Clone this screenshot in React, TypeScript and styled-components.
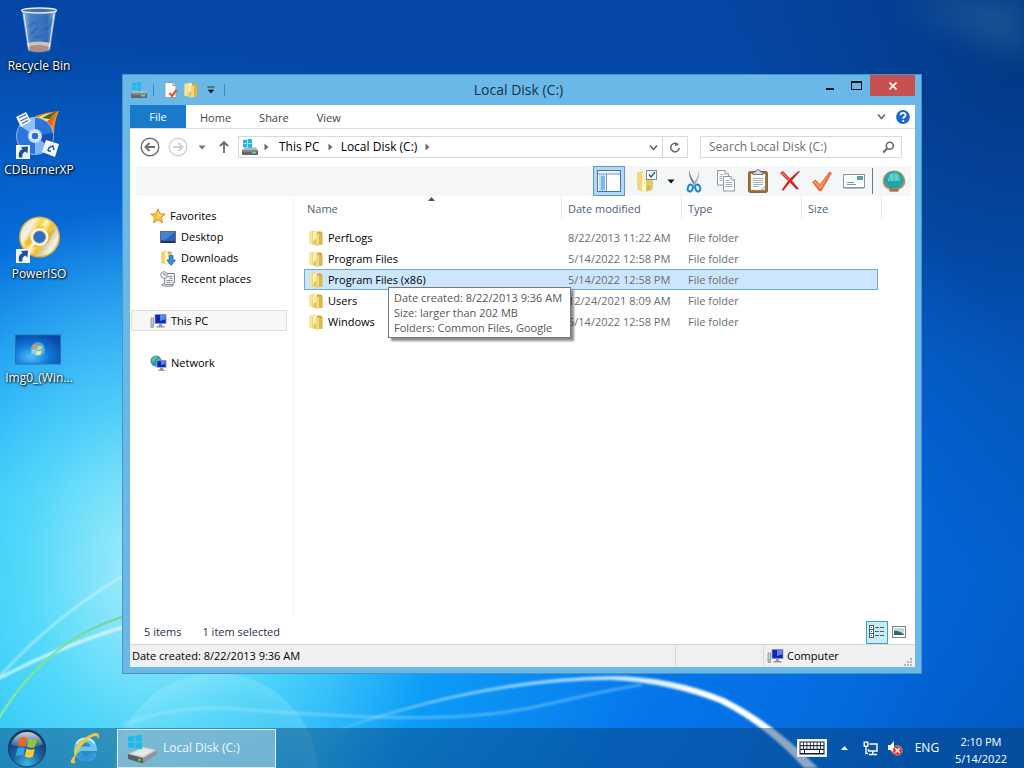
import React from "react";
import styled, { createGlobalStyle, css } from "styled-components";

const GlobalStyle = createGlobalStyle`
  *, *::before, *::after { box-sizing: border-box; }
  html, body, #root { height: 100%; }
  body {
    margin: 0;
    overflow: hidden;
    font-family: "Open Sans", "Noto Sans", "Liberation Sans", sans-serif;
    font-size: 11px;
    line-height: 16px;
    color: #000;
  }
  button, input { font: inherit; color: inherit; }
  svg { display: block; flex: none; }
`;

const buttonReset = css`
  border: 0;
  padding: 0;
  margin: 0;
  background: none;
`;

/* ---------- wallpaper ---------- */

const Screen = styled.div`
  position: relative;
  display: flex;
  flex-direction: column;
  min-height: 100vh;
  background:
    radial-gradient(ellipse 28% 48% at 15% 74%, rgba(196, 246, 250, 0.85), rgba(120, 232, 250, 0.6) 45%, rgba(50, 205, 250, 0) 100%),
    radial-gradient(ellipse 84% 74% at 8% 80%, #1cc4fa 0%, #1abcf8 22%, rgba(14, 160, 250, 0.9) 42%, rgba(6, 122, 240, 0.6) 68%, rgba(5, 95, 205, 0) 100%),
    radial-gradient(ellipse 58% 70% at 50% 80%, #0478ea 0%, rgba(4, 108, 228, 0.7) 60%, rgba(4, 90, 200, 0) 100%),
    radial-gradient(ellipse 30% 40% at 100% 8%, rgba(2, 44, 110, 0.6), rgba(2, 50, 130, 0) 100%),
    linear-gradient(180deg, #0546a4 0%, #0452b4 40%, #045cc4 75%, #0054b8 100%);
`;

const WallpaperSvg = styled.svg`
  position: absolute;
  inset: 0;
  width: 100%;
  height: 100%;
`;

function Wallpaper() {
  return (
    <WallpaperSvg viewBox="0 0 1024 768" preserveAspectRatio="none" aria-hidden="true">
      <defs>
        <filter id="soft" x="-20%" y="-20%" width="140%" height="140%">
          <feGaussianBlur stdDeviation="1" />
        </filter>
        <filter id="haze" x="-30%" y="-30%" width="160%" height="160%">
          <feGaussianBlur stdDeviation="16" />
        </filter>
        <linearGradient id="arc" gradientUnits="userSpaceOnUse" x1="340" y1="0" x2="700" y2="0">
          <stop offset="0" stopColor="#d8f4ff" stopOpacity=".3" />
          <stop offset=".6" stopColor="#d8f4ff" stopOpacity=".7" />
          <stop offset="1" stopColor="#fff" />
        </linearGradient>
        <linearGradient id="leaf" gradientUnits="userSpaceOnUse" x1="0" y1="717" x2="122" y2="618">
          <stop offset="0" stopColor="#8cf08c" />
          <stop offset="1" stopColor="#7cce8e" />
        </linearGradient>
        <radialGradient id="bubble">
          <stop offset="0" stopColor="#fff" stopOpacity="0" />
          <stop offset=".8" stopColor="#fff" stopOpacity=".06" />
          <stop offset="1" stopColor="#fff" stopOpacity=".14" />
        </radialGradient>
      </defs>
      <path d="M900 0h124v60q-60-30-124-60z" fill="#5a9aa8" opacity=".28" filter="url(#haze)" />
      <circle cx="216" cy="775" r="102" fill="url(#bubble)" />
      <g fill="none" strokeLinecap="round">
        <path d="M0 676Q56 614 130 572" stroke="#dffcff" strokeWidth="2" opacity=".7" filter="url(#soft)" />
        <path d="M0 678Q60 646 130 625" stroke="#f2ffff" strokeWidth="3" opacity=".75" filter="url(#soft)" />
        <path d="M-2 720Q48 636 130 615" stroke="url(#leaf)" strokeWidth="2" />
        <path d="M124 724Q180 704 240 709T380 717Q480 720 544 705T640 685" stroke="#b8ecff" strokeWidth="3" opacity=".35" filter="url(#soft)" />
      </g>
      <path d="M336 730Q480 678 611 676Q670 676 724 698Q772 722 818 768H804Q766 726 720 703Q670 683 611 680Q490 680 336 731z" fill="url(#arc)" filter="url(#soft)" />
    </WallpaperSvg>
  );
}

/* ---------- icons ---------- */

const FolderIcon = ({ size = 16 }: { size?: number }) => (
  <svg width={size} height={size} viewBox="0 0 16 16" aria-hidden="true">
    <path d="M1.500 2 7 .500V15L1.500 13.500z" fill="#e3c65c" />
    <path d="M1.500 2 4.500 1.200v13.100L1.500 13.500z" fill="#f6e798" />
    <path d="M6 1.500h7l1.500 1.500V14.500H6z" fill="#c9a83e" />
    <path d="M5 1.500 9 .700v15L5 14.500z" fill="#f9efb2" />
    <path d="M8 4 14 3v11.500L8 15.700z" fill="#d9b84c" />
    <path d="M8 4 11 3.500v11.600L8 15.700z" fill="#f0da80" />
    <path d="M5.500 11 8 9v6l-2.500-.700z" fill="#c4a245" opacity=".6" />
  </svg>
);

const WinMark = ({ x, y, s }: { x: number; y: number; s: number }) => (
  <g fill="#1cb9ea">
    <path d={`M${x} ${y + s * 0.12} ${x + s * 0.46} ${y + s * 0.05}V${y + s * 0.47}H${x}z`} />
    <path d={`M${x + s * 0.53} ${y + s * 0.04} ${x + s} ${y}V${y + s * 0.47}H${x + s * 0.53}z`} />
    <path d={`M${x} ${y + s * 0.53}H${x + s * 0.46}V${y + s * 0.95}L${x} ${y + s * 0.88}z`} />
    <path d={`M${x + s * 0.53} ${y + s * 0.53}H${x + s}V${y + s}L${x + s * 0.53} ${y + s * 0.96}z`} />
  </g>
);

const DriveIcon = () => (
  <svg width="18" height="18" viewBox="0 0 18 18" aria-hidden="true">
    <path d="M3 9.500h12l2 3H1z" fill="#b2b8bc" />
    <WinMark x={2} y={1} s={9} />
    <rect x="1" y="12" width="16" height="5" rx="1" fill="#5f676c" />
    <path d="M2 13h14" stroke="#a5abae" />
    <rect x="11" y="14" width="4" height="1.500" fill="#5fe07c" />
  </svg>
);

const BigDriveIcon = () => (
  <svg width="32" height="32" viewBox="0 0 32 32" aria-hidden="true">
    <path d="M2 22 17 15l14 3-14 8z" fill="#cfd2d3" />
    <path d="M2 22 17 26v5.500L2 27z" fill="#5b6163" />
    <path d="M17 26 31 18v4.500L17 31.500z" fill="#8f9698" />
    <path d="M6 21.500 18 16.500l9 1.700-10 6z" fill="#eceded" opacity=".8" />
    <path d="M12 27.500l3 .8" stroke="#3de04a" strokeWidth="2" />
    <WinMark x={2} y={3} s={14} />
  </svg>
);

const PropertiesIcon = () => (
  <svg width="16" height="16" viewBox="0 0 16 16" aria-hidden="true">
    <path d="M2 .5h8l3 3v12H2z" fill="#fdfdfd" stroke="#9aa3ab" />
    <path d="M10 .5v3h3" fill="#e1e6ea" stroke="#8c959c" />
    <path d="m6.500 11 2.500 3 4.500-6" fill="none" stroke="#e4572e" strokeWidth="2.200" />
  </svg>
);

const Chevron = ({ w = 9 }: { w?: number }) => (
  <svg width={w} height={w} viewBox="0 0 9 9" fill="none" stroke="#6d6d6d" strokeWidth="1.800" aria-hidden="true">
    <path d="m1 2.500 3.500 4 3.500-4" />
  </svg>
);

const CrumbArrow = () => (
  <svg width="5" height="8" viewBox="0 0 5 8" aria-hidden="true">
    <path d="M.5.500 4.500 4l-4 3.500z" fill="#6b6b6b" />
  </svg>
);

const DownTriangle = ({ color = "#111" }: { color?: string }) => (
  <svg width="8" height="5" viewBox="0 0 8 5" aria-hidden="true">
    <path d="M.5.500h7L4 4.500z" fill={color} />
  </svg>
);

const NavCircle = ({ faded, flip }: { faded?: boolean; flip?: boolean }) => (
  <svg width="20" height="20" viewBox="0 0 20 20" fill="none" stroke={faded ? "#d0d0d0" : "#6e6e6e"} aria-hidden="true">
    <circle cx="10" cy="10" r="8.800" strokeWidth="1.400" />
    {flip ? (
      <path d="M5 10h9M10.500 6l4 4-4 4" strokeWidth="2" />
    ) : (
      <path d="M15 10H6M9.500 6l-4 4 4 4" strokeWidth="2" />
    )}
  </svg>
);

const UpIcon = () => (
  <svg width="12" height="14" viewBox="0 0 12 14" fill="none" stroke="#6a6a6a" strokeWidth="1.800" aria-hidden="true">
    <path d="M6 13V2M2 6l4-4 4 4" />
  </svg>
);

const RefreshIcon = () => (
  <svg width="12" height="12" viewBox="0 0 12 12" fill="none" stroke="#6a6a6a" strokeWidth="1.600" aria-hidden="true">
    <path d="M9.200 3.600A4.300 4.300 0 1 0 10.300 7" />
    <path d="M6 1v4l3.600-1z" fill="#6a6a6a" stroke="none" />
  </svg>
);

const SearchIcon = () => (
  <svg width="13" height="13" viewBox="0 0 13 13" fill="none" stroke="#6a6a6a" aria-hidden="true">
    <circle cx="7.800" cy="4.800" r="3.500" strokeWidth="1.600" />
    <path d="M5.400 7.300 1.200 11.600" strokeWidth="2.200" />
  </svg>
);

const HelpIcon = () => (
  <svg width="14" height="14" viewBox="0 0 14 14" fill="none" aria-hidden="true">
    <circle cx="7" cy="7" r="6.900" fill="#1d66cc" />
    <path d="M4.600 5.200c0-3.200 5-3.100 5-.2 0 1.700-2.400 1.800-2.400 3.700" stroke="#fff" strokeWidth="1.800" />
    <circle cx="7.200" cy="11" r="1.100" fill="#fff" />
  </svg>
);

const PaneIcon = () => (
  <svg width="24" height="22" viewBox="0 0 24 22" aria-hidden="true">
    <rect x=".5" y=".5" width="23" height="21" fill="#fff" stroke="#3f78b4" />
    <path d="M1 1h22v2.500H1z" fill="#e6f1fc" />
    <path d="M1 4h22" stroke="#6d93ba" />
    <path d="M2 5.500h6v15H2z" fill="#7db7ec" />
    <path d="M2 5.500h2v15H2z" fill="#b9dbf8" />
    <path d="M9.500 4v17" stroke="#6d93ba" />
  </svg>
);

const FolderOptionsIcon = () => (
  <svg width="22" height="24" viewBox="0 0 22 24" aria-hidden="true">
    <path d="M1 3.500 7 2v21L1 20.500z" fill="#efd878" />
    <path d="M6 5h8l3 3v11l-3 3H6z" fill="#cfae4a" />
    <path d="M6 5 10 4v19l-4-1z" fill="#fbf3c2" />
    <path d="M10 11l7-1v10l-7 3z" fill="#e6c964" />
    <rect x="10.500" y="1.500" width="10" height="9" fill="#f4faf6" stroke="#7c9298" />
    <path d="m13 5.500 2 2.500 4-5" fill="none" stroke="#2a5f5c" strokeWidth="1.300" />
    <path d="M11 17.500h3M11 20l3-1" stroke="#8eae74" />
  </svg>
);

const CutIcon = () => (
  <svg width="16" height="24" viewBox="0 0 16 24" fill="none" aria-hidden="true">
    <path d="M3 1c1 5 3 9 7 14l-2 1C4 11 2.500 6 3 1z" fill="#6f8496" />
    <path d="M13 1c0 5-3 10-6 14l2 1c3-5 5-10 4-15z" fill="#9fb0bd" />
    <ellipse cx="4.300" cy="19" rx="2.400" ry="3.500" stroke="#1a84d6" strokeWidth="2" transform="rotate(18 4.300 19)" />
    <ellipse cx="11.700" cy="19" rx="2.400" ry="3.500" stroke="#1a84d6" strokeWidth="2" transform="rotate(-18 11.700 19)" />
  </svg>
);

const CopyIcon = () => (
  <svg width="20" height="24" viewBox="0 0 20 24" aria-hidden="true">
    <g fill="#fff" stroke="#8c9aa6">
      <path d="M1.500 1.500H9l3.500 3.500v11h-11z" />
      <path d="M9 1.500V5h3.500" />
      <path d="M7.500 7.500H15l3.500 3.500v11h-11z" />
      <path d="M15 7.500V11h3.500" />
    </g>
    <path d="M3.500 5.500h4M3.500 7.500h3M3.500 9.500h3M3.500 11.500h3M9.500 11.500h4M9.500 13.500h7M9.500 15.500h7M9.500 17.500h7" stroke="#9fafbb" />
  </svg>
);

const PasteIcon = () => (
  <svg width="20" height="24" viewBox="0 0 20 24" aria-hidden="true">
    <rect x=".7" y="2.700" width="18.600" height="20.600" rx="1" fill="#a87a3c" stroke="#6d4e26" />
    <rect x="3" y="5" width="14" height="16" fill="#fcfcfa" />
    <path d="M5 9.500h10M5 11.500h10M5 13.500h10M5 15.500h10M5 17.500h6" stroke="#9fb0bf" />
    <path d="M12 21h5v-5z" fill="#cdd4da" />
    <path d="M5 5.500V3h2.500q.5-2.500 2.500-2.500T12.500 3H15v2.500z" fill="#d7d9dc" stroke="#555c63" strokeWidth=".8" />
  </svg>
);

const DeleteIcon = () => (
  <svg width="22" height="22" viewBox="0 0 22 22" aria-hidden="true">
    <path d="M1 3 4 1l7 7.500L19.500 1l1.500.5L13 10.500 20 19l-2.500.5L11 12.500 4.500 20.500 2.500 20 9 11z" fill="#cf2a1f" />
    <path d="M2 3 4 2l7 7.500-1 1z" fill="#ef6d5e" />
  </svg>
);

const CheckIcon = () => (
  <svg width="22" height="22" viewBox="0 0 22 22" aria-hidden="true">
    <path d="M1 12 4.500 9.500 9 14 18.500 1.500 21 3 10.500 21H8z" fill="#e9703a" />
    <path d="M2.500 12 4.500 11 9 16 18.500 3 9.500 19z" fill="#f59a68" />
  </svg>
);

const MailIcon = () => (
  <svg width="22" height="16" viewBox="0 0 22 16" aria-hidden="true">
    <rect x=".5" y="1.500" width="21" height="13" fill="#fdfefe" stroke="#8b979e" />
    <rect x="14.500" y="3.500" width="5" height="3" fill="#4aa9a9" stroke="#5c9aa6" />
    <path d="M4 9.500h7M4 11.500h9" stroke="#7d97a6" />
    <path d="M1 15.500h20" stroke="#b5bcc0" />
  </svg>
);

const ShellIcon = () => (
  <svg width="24" height="22" viewBox="0 0 24 22" aria-hidden="true">
    <path d="M12 .5C19 .5 23.500 6 23.300 12c-.3 4-3.300 6.500-6.300 7.500l-1 2H8l-1-2C4 18.500 1 16 .700 12 .500 6 5 .500 12 .500z" fill="#c98a62" />
    <path d="M12 1.500c6 0 10 4.500 9.700 10-.3 3.500-3.200 6-6.200 7h-7c-3-1-5.900-3.500-6.200-7C2 6 6 1.500 12 1.500z" fill="#27a9a8" />
    <path d="M12 3c4 0 6 3 6 8H6c0-5 2-8 6-8z" fill="#6fdcd4" opacity=".8" />
    <path d="M12 18V2.500M10.500 18 6 4M13.500 18 18 4M9.500 18 3 8M14.500 18 21 8" stroke="#1d8f92" strokeWidth=".5" />
    <path d="M8 21.500h8l1-2.500H7z" fill="#b56b43" />
  </svg>
);

const StarIcon = () => (
  <svg width="16" height="16" viewBox="0 0 16 16" aria-hidden="true">
    <path d="m8 .8 2 5 5.300.3-4.100 3.400 1.400 5.300L8 11.900l-4.600 2.900 1.400-5.300L.700 6.100 6 5.800z" fill="#fcc53a" stroke="#d98320" strokeWidth=".9" />
    <path d="m8 3 1.200 3.600 3 .3L8 9z" fill="#fff0a0" />
  </svg>
);

const DesktopIcon = () => (
  <svg width="16" height="14" viewBox="0 0 16 14" aria-hidden="true">
    <rect x=".5" y="1.500" width="15" height="11" fill="#2c62b8" stroke="#5c6c80" />
    <path d="M1 2h14L6 9.500 1 10z" fill="#4c8ae0" opacity=".8" />
    <path d="M1 12h14" stroke="#16273f" strokeWidth="1.500" />
  </svg>
);

const DownloadsIcon = () => (
  <svg width="16" height="16" viewBox="0 0 16 16" aria-hidden="true">
    <path d="M1 2 6 .500V14.500L1 13z" fill="#edd678" />
    <path d="M5 1.500h6l1 1V14H5z" fill="#cfae4a" />
    <path d="M5 1.500 8 .800V15L5 14z" fill="#fbf2c0" />
    <path d="M8 4 12 3.500v10L8 14.500z" fill="#e6ca66" />
    <path d="M9.500 5.500h3.500v4.500h2.500L11.200 15.500 7 10h2.500z" fill="#2f8fe0" stroke="#1863ae" strokeWidth=".7" />
  </svg>
);

const RecentIcon = () => (
  <svg width="16" height="16" viewBox="0 0 16 16" aria-hidden="true">
    <path d="M4.500 2.500h10v9h-1.500v3.500H3.500q-1.500 0-1.500-2h2.500z" fill="#eef0f1" stroke="#7d868c" />
    <path d="M7.500 5.500h5M9.500 7.500h3M6.500 9.500h6M6.500 11.500h4M5 13.500h8" stroke="#8c969d" />
    <circle cx="4" cy="4" r="3.300" fill="#f7f8f8" stroke="#8a9298" />
    <path d="M4 2v2h1.700" fill="none" stroke="#555" strokeWidth=".8" />
  </svg>
);

const ComputerIcon = () => (
  <svg width="17" height="16" viewBox="0 0 17 16" aria-hidden="true">
    <path d="M1 5h2.500v9.500H1z" fill="#c9ced2" stroke="#7b858c" strokeWidth=".7" />
    <path d="M1.500 12h1.500" stroke="#55c04c" />
    <rect x="4.500" y="1" width="12" height="10" fill="#a9b1bb" />
    <rect x="5.300" y="1.800" width="10.400" height="8.400" fill="#0d28b8" />
    <path d="M10 1.800h5.700v4.500L10 8z" fill="#5e80ea" />
    <path d="M9 11h3v2H9zM6.500 13h8v1.500h-8z" fill="#8e98a2" />
  </svg>
);

const NetworkPlacesIcon = () => (
  <svg width="17" height="16" viewBox="0 0 17 16" aria-hidden="true">
    <circle cx="6" cy="6" r="5.500" fill="#2b8fd0" />
    <path d="M2 3q2-2.500 5-2 1 2-1 3.500T3 8Q1.500 6 2 3zM8 3q3 0 3 3L8 7z" fill="#5cc46a" />
    <rect x="6.500" y="5" width="10" height="8" fill="#a9b1bb" />
    <rect x="7.300" y="5.800" width="8.400" height="6.200" fill="#0d28b8" />
    <path d="M11 5.800h4.700v3L11 10z" fill="#5e80ea" />
    <path d="M10 13h3v1.500h-3zM8.500 14.500h6V16h-6z" fill="#8e98a2" />
  </svg>
);

const DetailsViewIcon = () => (
  <svg width="16" height="14" viewBox="0 0 16 14" aria-hidden="true">
    <g fill="#fff" stroke="#48616c">
      <rect x=".5" y=".5" width="4" height="4" />
      <rect x=".5" y="4.500" width="4" height="4" />
      <rect x=".5" y="8.500" width="4" height="4" />
    </g>
    <path d="M6 2.500h4M11 2.500h4M6 6.500h4M11 6.500h4M6 10.500h4M11 10.500h4" stroke="#48616c" />
    <path d="M2 2.500h1M2 6.500h1M2 10.500h1" stroke="#48616c" />
  </svg>
);

const LargeViewIcon = () => (
  <svg width="14" height="12" viewBox="0 0 14 12" aria-hidden="true">
    <rect x=".5" y=".5" width="13" height="11" fill="#fff" stroke="#74858d" />
    <rect x="2" y="2" width="10" height="7" fill="#bcd9dc" />
    <path d="M2 9V5q4-1 10 3.500V9z" fill="#2f6a60" />
  </svg>
);

const GripIcon = () => (
  <svg width="10" height="10" viewBox="0 0 10 10" fill="#b4b4b4" aria-hidden="true">
    <path d="M7 1h2v2H7zM4 4h2v2H4zM7 4h2v2H7zM1 7h2v2H1zM4 7h2v2H4zM7 7h2v2H7z" />
  </svg>
);

const RecycleBinIcon = () => (
  <svg width="48" height="48" viewBox="0 0 48 48" aria-hidden="true">
    <defs>
      <linearGradient id="glass" x1="0" x2="1">
        <stop offset="0" stopColor="#e4f0fb" stopOpacity=".75" />
        <stop offset=".25" stopColor="#8fb4e2" stopOpacity=".5" />
        <stop offset=".75" stopColor="#6c9ad6" stopOpacity=".45" />
        <stop offset="1" stopColor="#e8f2fb" stopOpacity=".8" />
      </linearGradient>
    </defs>
    <path d="M7 3h34l-6 41q-11 3-22 0z" fill="url(#glass)" />
    <path d="M12 36q12-3 24 0l-1.500 7q-10.500 3.500-21 0z" fill="#dccbc6" opacity=".9" />
    <path d="M13 40q8-4 22 0l-.5 3q-10.500 3.500-21 0z" fill="#a8806e" opacity=".8" />
    <ellipse cx="24" cy="3.500" rx="17.500" ry="2.500" fill="#4c6f9c" stroke="#dde8f2" strokeWidth="1.400" />
    <path d="M14 20q5-8 9-2M16 27l6-6M37 12q-2 12-10 10M18 29q7 3 12-2" fill="none" stroke="#1d5db4" strokeWidth="2" opacity=".5" />
    <path d="M9 7l5 35M39 7l-5 35" stroke="#f5faff" strokeWidth="1.200" opacity=".7" />
  </svg>
);

const ShortcutBadge = () => (
  <g>
    <rect x="1" y="34" width="14" height="14" fill="#f2f7fb" />
    <path d="M4 46.500q-1.500-6.500 3.500-8.500L6 36l7-.5-.5 7-2-2Q6.500 42 7.500 46.500z" fill="#1e4f9c" />
  </g>
);

const BurnerIcon = () => (
  <svg width="48" height="48" viewBox="0 0 48 48" aria-hidden="true">
    <path d="M20 5Q32 1 44 0 40 8 39 22L32 28z" fill="#f58a1c" />
    <path d="M24 6q8-4 14-4-4 6-4 16l-4 3z" fill="#ffe27a" />
    <path d="M27 7q8-5 16-7-6 4-8 8z" fill="#3e6a30" />
    <path d="M30 12 42 2q-5 8-6 14z" fill="#e0641a" />
    <circle cx="20" cy="25" r="18.500" fill="#2b74dc" stroke="#a8cdf8" strokeWidth=".8" />
    <path d="M20 25 4 14A18.500 18.500 0 0 1 20 6.500z" fill="#8fc2fc" />
    <path d="M20 25 34 36a18.500 18.500 0 0 1-14 7.500z" fill="#7fb6f8" />
    <path d="M20 25 38 22a18.500 18.500 0 0 1-3 13z" fill="#174fb0" />
    <circle cx="20" cy="25" r="7" fill="#c9e2ff" />
    <circle cx="20" cy="25" r="4" fill="#2d6fd0" stroke="#fff" />
    <path d="m1 6 10-5 5 9-10 6z" fill="#f6f8fb" />
    <path d="m4 7 7-3.500M5.500 10l7-3.500M7 12.500l6-3" stroke="#3c66b4" strokeWidth="1.200" />
    <path d="m31 29 13 4-4 13-13-5z" fill="#f6f8fb" />
    <path d="M33 40q0-4 5-5l1 4M33 40h3" fill="none" stroke="#2d5bb0" strokeWidth="1.600" />
    <ShortcutBadge />
  </svg>
);

const PowerIsoIcon = () => (
  <svg width="48" height="48" viewBox="0 0 48 48" aria-hidden="true">
    <defs>
      <linearGradient id="isoDisc" x1="0" y1=".2" x2="1" y2=".8">
        <stop offset="0" stopColor="#dedcd2" />
        <stop offset=".2" stopColor="#f4f2ea" />
        <stop offset=".36" stopColor="#f4d040" />
        <stop offset=".46" stopColor="#fdf6c8" />
        <stop offset=".6" stopColor="#eec22c" />
        <stop offset=".72" stopColor="#d8cfae" />
        <stop offset=".86" stopColor="#f6f4ea" />
        <stop offset="1" stopColor="#cfc8a8" />
      </linearGradient>
    </defs>
    <circle cx="24.500" cy="22" r="20.500" fill="#d9b23c" />
    <circle cx="24.500" cy="22" r="19" fill="url(#isoDisc)" />
    <path d="M9 28 22 12l8-1-16 20z" fill="#e9b92c" opacity=".8" />
    <path d="M17 33 33 28l7-14-8 5z" fill="#dba91c" opacity=".7" />
    <circle cx="24.500" cy="22" r="9" fill="#f6f3ea" />
    <circle cx="24.500" cy="22" r="6" fill="#2a6fc4" stroke="#8a8a78" />
    <ShortcutBadge />
  </svg>
);

const ThumbnailIcon = () => (
  <svg width="48" height="48" viewBox="0 0 48 48" aria-hidden="true">
    <defs>
      <radialGradient id="thumb" cx=".35" cy=".75" r=".8">
        <stop offset="0" stopColor="#4cc3f8" />
        <stop offset=".5" stopColor="#1277d8" />
        <stop offset="1" stopColor="#0a4aa8" />
      </radialGradient>
    </defs>
    <rect x=".5" y="16" width="45" height="29" fill="url(#thumb)" stroke="#2a70b0" />
    <circle cx="23" cy="30" r="7" fill="#b9ecff" opacity=".4" />
    <path d="M18 26q2.500-1.500 4.500 0l-1 4q-2.500-1-4.500 0z" fill="#e0906a" />
    <path d="M23 26.500q2.500 1.500 4.500 0l-1 4q-2.500 1-4.500 0z" fill="#b6e38a" />
    <path d="M17 31q2.500-1.500 4.500 0l-1 4q-2.500-1-4.500 0z" fill="#8fd0fa" />
    <path d="M22 31.500q2.500 1.500 4.500 0l-1 4q-2.500 1-4.500 0z" fill="#f8e890" />
  </svg>
);

const StartOrb = () => (
  <svg width="40" height="40" viewBox="0 0 40 40" aria-hidden="true">
    <defs>
      <radialGradient id="orb" cx=".5" cy=".9" r=".9">
        <stop offset="0" stopColor="#39b6e8" />
        <stop offset=".45" stopColor="#1c5f9c" />
        <stop offset="1" stopColor="#0c2c54" />
      </radialGradient>
      <linearGradient id="gloss" x1="0" x2="0" y1="0" y2="1">
        <stop offset="0" stopColor="#fff" stopOpacity=".8" />
        <stop offset="1" stopColor="#fff" stopOpacity=".1" />
      </linearGradient>
    </defs>
    <circle cx="20" cy="20.500" r="18.500" fill="url(#orb)" stroke="#123a60" />
    <path d="M4 16.500A16.500 16.500 0 0 1 36 16.500Q20 22 4 16.500z" fill="url(#gloss)" />
    <path d="M12.500 10.500q4-2.500 7.500-.500l-1.700 8.500q-4-1.800-7.500.300z" fill="#f0632a" />
    <path d="M21.500 10.800q4 2.200 8.500 0l-2 8.200q-4 2-8-.200z" fill="#8ac63e" />
    <path d="M10.400 20.200q4-2 7.500-.200l-1.800 8q-3.500-1.800-7.500.200z" fill="#35a2e4" />
    <path d="M19.600 20.500q4 2.200 8.200.300l-2 8q-4 1.800-8-.300z" fill="#fdc92c" />
  </svg>
);

const IeIcon = () => (
  <svg width="34" height="34" viewBox="0 0 34 34" fill="none" aria-hidden="true">
    <path d="M29 20H12.500c.5 6 8.500 7 10.500 2.500h5.500C26 33.500 6 33 6 18.500 6 4 27.500 3 29 17.500zM12.700 15.500h10c-.8-5.500-9-5.500-10 0z" fill="#6cc8f2" />
    <path d="M8 24c3 8 16 9 20.500-1.500H23c-2 4-10 3.500-10.500-2.500z" fill="#2f98dc" />
    <path d="M8.500 13c3-7 14-7.500 18-.5" stroke="#c9eefd" strokeWidth="2" />
    <path d="M6.500 24C1 31 2 34 8 31.500 3.500 31 10 14 24 6c5-2.500 7-.5 5.500 4 3-5 1.500-9.500-4-7.500C14 6 4 19 6.500 24z" fill="#f6c931" />
  </svg>
);

const KeyboardIcon = () => (
  <svg width="30" height="18" viewBox="0 0 30 18" aria-hidden="true">
    <rect x=".5" y=".5" width="29" height="17" fill="#fff" stroke="#e8eef4" />
    <rect x="2.500" y="2.500" width="25" height="13" fill="#0c1c30" />
    <g fill="#fff">
      {[0, 1, 2, 3, 4, 5, 6].map((i) => (
        <React.Fragment key={i}>
          <rect x={3.500 + i * 3.400} y="3.500" width="2.600" height="2.600" />
          <rect x={3.500 + i * 3.400} y="7.200" width="2.600" height="2.600" />
        </React.Fragment>
      ))}
      <rect x="3.500" y="11" width="3.500" height="3" />
      <rect x="8" y="11" width="14" height="3" />
      <rect x="23" y="11" width="3.500" height="3" />
    </g>
  </svg>
);

const TrayNetworkIcon = () => (
  <svg width="16" height="15" viewBox="0 0 16 15" fill="none" stroke="#fff" strokeWidth="1.400" aria-hidden="true">
    <path d="M6.500 3H14v7H5.500V8" />
    <path d="M9.800 10v3M6 13.500h8" />
    <rect x="1.200" y="1.200" width="3.600" height="4" />
    <path d="M3 5v7.500h2" />
  </svg>
);

const TrayVolumeIcon = () => (
  <svg width="16" height="16" viewBox="0 0 16 16" aria-hidden="true">
    <path d="M1 5h2.500L7 1v13l-3.500-4H1z" fill="#fff" />
    <circle cx="10.500" cy="10.500" r="4.800" fill="#d9382e" stroke="#f5b5b0" strokeWidth=".6" />
    <path d="m8.300 8.300 4.400 4.400M12.700 8.300l-4.400 4.400" stroke="#fff" strokeWidth="1.500" />
  </svg>
);

/* ---------- desktop ---------- */

const Desktop = styled.main`
  position: relative;
  flex: 1;
  min-height: 560px;
  font-size: 12px;
`;

const Shortcuts = styled.div`
  display: flex;
  flex-direction: column;
  gap: 34px;
  width: 78px;
  padding-top: 7px;
`;

const Shortcut = styled.button`
  ${buttonReset}
  display: flex;
  flex-direction: column;
  align-items: center;
  gap: 2px;
  height: 70px;
  color: #fff;
  line-height: 18px;
  text-shadow: 1px 1px 2px #000, 0 0 3px rgba(0, 0, 0, 0.8);
  white-space: nowrap;
`;

/* ---------- explorer window ---------- */

const Window = styled.section`
  position: absolute;
  inset: 74px 102px 54px 122px;
  display: flex;
  flex-direction: column;
  padding: 0 6px 6px 7px;
  background: #6ab8e8;
  border: 1px solid #4a92c8;
`;

const TitleBar = styled.header`
  display: grid;
  grid-template-columns: 1fr auto 1fr;
  height: 30px;
  color: #16324a;
`;

const QuickAccess = styled.div`
  display: flex;
  align-items: center;
  gap: 4px;
`;

const QuickButton = styled.button`
  ${buttonReset}
  display: grid;
  place-items: center;
  min-width: 16px;
`;

const QuickDivider = styled.span`
  width: 1px;
  height: 12px;
  margin: 0 5px 0 1px;
  background: #4785b4;
`;

const Title = styled.h1`
  margin: 0;
  padding-right: 8px;
  font-size: 14px;
  font-weight: 400;
  line-height: 30px;
`;

const Caption = styled.div`
  display: flex;
  justify-content: flex-end;
`;

const CaptionButton = styled.button<{ $close?: boolean }>`
  ${buttonReset}
  display: grid;
  place-items: center;
  width: ${(p) => (p.$close ? 45 : 27)}px;
  height: 21px;
  background: ${(p) => (p.$close ? "#c75050" : "transparent")};
`;

const Client = styled.div`
  display: flex;
  flex: 1;
  flex-direction: column;
  min-height: 0;
  background: #fff;
  font-size: 11px;
`;

const Ribbon = styled.div`
  display: flex;
  align-items: center;
  height: 24px;
  padding-right: 1px;
  border-bottom: 1px solid #dfe0e1;
`;

const RibbonTab = styled.button<{ $file?: boolean }>`
  ${buttonReset}
  align-self: stretch;
  padding: 2px 14px 0;
  color: #444;
  ${(p) =>
    p.$file &&
    css`
      width: 56px;
      padding: 0;
      background: #1979ca;
      color: #fff;
    `}
`;

const Spacer = styled.span`
  flex: 1;
`;

const IconButton = styled.button<{ $w?: number }>`
  ${buttonReset}
  display: grid;
  place-items: center;
  width: ${(p) => p.$w ?? 22}px;
  height: 22px;
`;

const AddressRow = styled.div`
  display: flex;
  align-items: center;
  height: 37px;
  padding: 0 13px 1px 6px;
  font-size: 12px;
`;

const AddressBox = styled.nav`
  display: flex;
  align-items: center;
  flex: 1;
  height: 22px;
  margin-left: 2px;
  border: 1px solid #d9d9d9;
`;

const Crumb = styled.button`
  ${buttonReset}
  padding: 0 8px;
`;

const Refresh = styled.button`
  ${buttonReset}
  display: grid;
  place-items: center;
  align-self: stretch;
  width: 25px;
  border-left: 1px solid #d9d9d9;
`;

const SearchBox = styled.label`
  display: flex;
  align-items: center;
  width: 202px;
  height: 22px;
  margin-left: 12px;
  padding: 0 6px 0 8px;
  border: 1px solid #d9d9d9;
`;

const SearchInput = styled.input`
  flex: 1;
  min-width: 0;
  padding: 0;
  border: 0;
  outline: 0;
  background: none;
  &::placeholder {
    color: #6d6d6d;
    opacity: 1;
  }
`;

const Toolbar = styled.div`
  display: flex;
  align-items: center;
  justify-content: flex-end;
  height: 30px;
  margin: 0 4px 0 6px;
  padding-right: 1px;
  background: #f5f6f7;
`;

const Tool = styled.button<{ $active?: boolean; $w?: number }>`
  ${buttonReset}
  display: grid;
  place-items: center;
  width: ${(p) => p.$w ?? 32}px;
  height: 30px;
  ${(p) =>
    p.$active &&
    css`
      margin-right: 6px;
      background: #b5d5f5;
      border: 1px solid #5a97d4;
    `}
`;

const ToolDivider = styled.span`
  width: 1px;
  height: 26px;
  margin: 0 5px 0 2px;
  background: #6f7780;
`;

const Body = styled.div`
  display: flex;
  flex: 1;
  min-height: 0;
`;

const Sidebar = styled.aside`
  display: flex;
  flex-direction: column;
  gap: 21px;
  flex: none;
  width: 164px;
  padding: 9px 6px 0 1px;
  border-right: 1px solid #f7f7f7;
`;

const TreeGroup = styled.ul`
  margin: 0;
  padding: 0;
  list-style: none;
`;

const TreeItem = styled.a<{ $child?: boolean; $selected?: boolean }>`
  display: flex;
  align-items: center;
  gap: ${(p) => (p.$child ? 5 : 4)}px;
  height: 21px;
  padding-left: ${(p) => (p.$child ? 28 : 18)}px;
  border: 1px solid ${(p) => (p.$selected ? "#dedede" : "transparent")};
  background: ${(p) => (p.$selected ? "#f7f7f7" : "transparent")};
  color: #000;
  text-decoration: none;
`;

const Files = styled.div`
  flex: 1;
  min-width: 0;
  padding-left: 10px;
`;

const FileTable = styled.table`
  width: 578px;
  table-layout: fixed;
  border-collapse: separate;
  border-spacing: 0;

  th, td {
    padding: 0 0 0 6px;
    text-align: left;
    font-weight: 400;
    white-space: nowrap;
  }
  th {
    height: 22px;
    padding-top: 4px;
    border-right: 1px solid #e8e8e8;
    color: #4c607a;
  }
  th:first-child { padding-left: 3px; }
  tbody::before {
    content: "";
    display: table-row;
    height: 9px;
  }
  td {
    height: 21px;
    color: #6d6d6d;
  }
`;

const SortMark = styled.span`
  position: absolute;
  top: 1px;
  left: 50%;
  margin-left: -5px;
`;

const HeadCell = styled.th`
  position: relative;
`;

const FileRow = styled.tr<{ $selected?: boolean }>`
  ${(p) =>
    p.$selected &&
    css`
      td {
        background: #cce6ff padding-box;
        box-shadow: inset 0 1px #6fa8dc, inset 0 -1px #6fa8dc;
      }
      td:first-child { box-shadow: inset 0 1px #6fa8dc, inset 0 -1px #6fa8dc, inset 1px 0 #6fa8dc; }
      td:last-child {
        border-right: 4px solid transparent;
        box-shadow: inset 0 1px #6fa8dc, inset 0 -1px #6fa8dc, inset -1px 0 #6fa8dc;
      }
    `}
`;

const NameCell = styled.td`
  position: relative;
`;

const FileName = styled.span`
  display: flex;
  align-items: center;
  gap: 4px;
  margin-left: -2px;
  color: #000;
`;

const Tooltip = styled.div`
  position: absolute;
  z-index: 2;
  top: 18px;
  left: 84px;
  padding: 2px 8px 2px 5px;
  background: #fff;
  border: 1px solid #767676;
  box-shadow: 3px 3px 2px rgba(0, 0, 0, 0.45);
  color: #575757;
  line-height: 15px;
`;

const DetailsBar = styled.div`
  display: flex;
  align-items: center;
  gap: 21px;
  height: 24px;
  padding: 0 5px 0 14px;
  color: #1e3247;
`;

const ViewSwitch = styled.div`
  display: flex;
  margin-left: auto;
`;

const ViewButton = styled.button<{ $active?: boolean }>`
  ${buttonReset}
  display: grid;
  place-items: center;
  width: 22px;
  height: 23px;
  ${(p) =>
    p.$active &&
    css`
      background: #c6ecfa;
      border: 1px solid #3d9fc4;
    `}
`;

const StatusBar = styled.footer`
  display: flex;
  height: 23px;
  background: #f0f0f0;
  border-top: 1px solid #d7d7d7;
`;

const StatusPane = styled.div<{ $w?: number }>`
  display: flex;
  align-items: center;
  gap: 3px;
  padding: 0 2px;
  flex: ${(p) => (p.$w ? `0 0 ${p.$w}px` : "1")};
  & + & {
    padding-left: 3px;
    border-left: 1px solid #d7d7d7;
  }
`;

const Grip = styled.span`
  align-self: flex-end;
  margin-left: auto;
`;

/* ---------- taskbar ---------- */

const Taskbar = styled.footer`
  position: relative;
  display: flex;
  align-items: center;
  height: 40px;
  padding: 0 17px 0 7px;
  background: rgba(8, 62, 112, 0.45);
  color: #fff;
  font-size: 12px;
`;

const LaunchButton = styled.button`
  ${buttonReset}
  display: grid;
  place-items: center;
  width: 40px;
  height: 40px;
`;

const PinnedButton = styled(LaunchButton)`
  margin: 0 12px 0 18px;
`;

const TaskButton = styled.button`
  ${buttonReset}
  display: flex;
  align-items: center;
  gap: 5px;
  width: 159px;
  height: 39px;
  padding: 0 8px;
  background: rgba(190, 224, 236, 0.5);
  border: 1px solid #d6eef8;
  color: #eaf6ff;
`;

const Tray = styled.div`
  display: flex;
  align-items: center;
  gap: 8px;
  margin-left: auto;
`;

const TrayButton = styled.button<{ $w?: number }>`
  ${buttonReset}
  display: grid;
  place-items: center;
  width: ${(p) => p.$w ?? 16}px;
`;

const Clock = styled.time`
  margin-left: 4px;
  padding-top: 3px;
  font-size: 11px;
  line-height: 17px;
  text-align: center;
`;

const shortcuts = [
  { label: "Recycle Bin", icon: <RecycleBinIcon /> },
  { label: "CDBurnerXP", icon: <BurnerIcon /> },
  { label: "PowerISO", icon: <PowerIsoIcon /> },
  { label: "Img0_(Win...", icon: <ThumbnailIcon /> },
];

const tree = [
  [
    { label: "Favorites", icon: <StarIcon /> },
    { label: "Desktop", icon: <DesktopIcon />, child: true },
    { label: "Downloads", icon: <DownloadsIcon />, child: true },
    { label: "Recent places", icon: <RecentIcon />, child: true },
  ],
  [{ label: "This PC", icon: <ComputerIcon />, selected: true }],
  [{ label: "Network", icon: <NetworkPlacesIcon /> }],
] as { label: string; icon: React.ReactNode; child?: boolean; selected?: boolean }[][];

const files = [
  { name: "PerfLogs", modified: "8/22/2013 11:22 AM" },
  { name: "Program Files", modified: "5/14/2022 12:58 PM" },
  {
    name: "Program Files (x86)",
    modified: "5/14/2022 12:58 PM",
    tip: ["Date created: 8/22/2013 9:36 AM", "Size: larger than 202 MB", "Folders: Common Files, Google"],
  },
  { name: "Users", modified: "12/24/2021 8:09 AM" },
  { name: "Windows", modified: "5/14/2022 12:58 PM" },
];

const tools = [
  { label: "Cut", icon: <CutIcon /> },
  { label: "Copy", icon: <CopyIcon /> },
  { label: "Paste", icon: <PasteIcon /> },
  { label: "Delete", icon: <DeleteIcon /> },
  { label: "Properties", icon: <CheckIcon /> },
  { label: "E-mail", icon: <MailIcon /> },
];

function ExplorerTitle() {
  return (
    <TitleBar>
      <QuickAccess>
        <DriveIcon />
        <QuickDivider />
        <QuickButton aria-label="Properties"><PropertiesIcon /></QuickButton>
        <QuickButton aria-label="New folder"><FolderIcon /></QuickButton>
        <QuickButton aria-label="Customize toolbar">
          <svg width="8" height="8" viewBox="0 0 8 8" aria-hidden="true">
            <path d="M.5 1h7M1.500 4h5L4 7z" fill="#111" stroke="#111" strokeWidth=".8" />
          </svg>
        </QuickButton>
        <QuickDivider />
      </QuickAccess>
      <Title>Local Disk (C:)</Title>
      <Caption>
        <CaptionButton aria-label="Minimize">
          <svg width="8" height="12" viewBox="0 0 8 12" aria-hidden="true"><path d="M0 8h8v2H0z" fill="#111" /></svg>
        </CaptionButton>
        <CaptionButton aria-label="Maximize">
          <svg width="11" height="9" viewBox="0 0 11 9" fill="none" aria-hidden="true">
            <rect x=".5" y="1" width="10" height="7.500" stroke="#111" />
            <path d="M0 1h11" stroke="#111" strokeWidth="2" />
          </svg>
        </CaptionButton>
        <CaptionButton $close aria-label="Close">
          <svg width="8" height="8" viewBox="0 0 8 8" stroke="#fff" strokeWidth="1.600" aria-hidden="true">
            <path d="m.5.500 7 7M7.500.500l-7 7" />
          </svg>
        </CaptionButton>
      </Caption>
    </TitleBar>
  );
}

function Explorer() {
  return (
    <Window aria-label="Local Disk (C:)">
      <ExplorerTitle />
      <Client>
        <Ribbon>
          <RibbonTab $file>File</RibbonTab>
          <RibbonTab>Home</RibbonTab>
          <RibbonTab>Share</RibbonTab>
          <RibbonTab>View</RibbonTab>
          <Spacer />
          <IconButton aria-label="Expand ribbon"><Chevron /></IconButton>
          <IconButton aria-label="Help"><HelpIcon /></IconButton>
        </Ribbon>
        <AddressRow>
          <IconButton $w={28} aria-label="Back"><NavCircle /></IconButton>
          <IconButton $w={28} aria-label="Forward"><NavCircle faded flip /></IconButton>
          <IconButton $w={20} aria-label="Recent locations"><DownTriangle color="#777" /></IconButton>
          <IconButton $w={24} aria-label="Up"><UpIcon /></IconButton>
          <AddressBox aria-label="Address">
            <IconButton aria-label="Drive"><DriveIcon /></IconButton>
            <IconButton $w={10} aria-label="Locations"><CrumbArrow /></IconButton>
            <Crumb>This PC</Crumb>
            <CrumbArrow />
            <Crumb>Local Disk (C:)</Crumb>
            <CrumbArrow />
            <Spacer />
            <IconButton $w={18} aria-label="Previous locations"><Chevron /></IconButton>
            <Refresh aria-label="Refresh"><RefreshIcon /></Refresh>
          </AddressBox>
          <SearchBox>
            <SearchInput type="text" aria-label="Search Local Disk (C:)" placeholder="Search Local Disk (C:)" />
            <SearchIcon />
          </SearchBox>
        </AddressRow>
        <Toolbar>
          <Tool $active aria-label="Navigation pane"><PaneIcon /></Tool>
          <Tool aria-label="Folder options"><FolderOptionsIcon /></Tool>
          <Tool $w={15} aria-label="More options"><DownTriangle /></Tool>
          {tools.map((t) => (
            <Tool key={t.label} aria-label={t.label}>{t.icon}</Tool>
          ))}
          <ToolDivider />
          <Tool aria-label="Classic settings"><ShellIcon /></Tool>
        </Toolbar>
        <Body>
          <Sidebar>
            {tree.map((group) => (
              <TreeGroup key={group[0].label}>
                {group.map((item) => (
                  <li key={item.label}>
                    <TreeItem href="#" $child={item.child} $selected={item.selected}>
                      {item.icon}
                      {item.label}
                    </TreeItem>
                  </li>
                ))}
              </TreeGroup>
            ))}
          </Sidebar>
          <Files>
            <FileTable>
              <colgroup>
                <col style={{ width: 258 }} />
                <col style={{ width: 120 }} />
                <col style={{ width: 120 }} />
                <col style={{ width: 80 }} />
              </colgroup>
              <thead>
                <tr>
                  <HeadCell>
                    Name
                    <SortMark>
                      <svg width="7" height="4" viewBox="0 0 7 4" aria-hidden="true"><path d="M0 4 3.500 0 7 4z" fill="#555" /></svg>
                    </SortMark>
                  </HeadCell>
                  <th>Date modified</th>
                  <th>Type</th>
                  <th>Size</th>
                </tr>
              </thead>
              <tbody>
                {files.map((f) => (
                  <FileRow key={f.name} $selected={!!f.tip}>
                    <NameCell>
                      <FileName>
                        <FolderIcon />
                        {f.name}
                      </FileName>
                      {f.tip && (
                        <Tooltip role="tooltip">
                          {f.tip.map((line) => <div key={line}>{line}</div>)}
                        </Tooltip>
                      )}
                    </NameCell>
                    <td>{f.modified}</td>
                    <td>File folder</td>
                    <td />
                  </FileRow>
                ))}
              </tbody>
            </FileTable>
          </Files>
        </Body>
        <DetailsBar>
          <span>5 items</span>
          <span>1 item selected</span>
          <ViewSwitch>
            <ViewButton $active aria-label="Details view"><DetailsViewIcon /></ViewButton>
            <ViewButton aria-label="Large icons view"><LargeViewIcon /></ViewButton>
          </ViewSwitch>
        </DetailsBar>
        <StatusBar>
          <StatusPane>Date created: 8/22/2013 9:36 AM</StatusPane>
          <StatusPane $w={88} />
          <StatusPane $w={152}>
            <ComputerIcon />
            Computer
            <Grip><GripIcon /></Grip>
          </StatusPane>
        </StatusBar>
      </Client>
    </Window>
  );
}

export default function App() {
  return (
    <>
      <GlobalStyle />
      <Screen>
        <Wallpaper />
        <Desktop>
          <Shortcuts>
            {shortcuts.map((s) => (
              <Shortcut key={s.label}>
                {s.icon}
                {s.label}
              </Shortcut>
            ))}
          </Shortcuts>
          <Explorer />
        </Desktop>
        <Taskbar>
          <LaunchButton aria-label="Start"><StartOrb /></LaunchButton>
          <PinnedButton aria-label="Internet Explorer"><IeIcon /></PinnedButton>
          <TaskButton>
            <BigDriveIcon />
            Local Disk (C:)
          </TaskButton>
          <Tray>
            <TrayButton $w={30} aria-label="Touch keyboard"><KeyboardIcon /></TrayButton>
            <TrayButton $w={20} aria-label="Show hidden icons">
              <svg width="7" height="4" viewBox="0 0 7 4" aria-hidden="true"><path d="M0 4 3.500 0 7 4z" fill="#fff" /></svg>
            </TrayButton>
            <TrayButton aria-label="Network"><TrayNetworkIcon /></TrayButton>
            <TrayButton aria-label="Volume muted"><TrayVolumeIcon /></TrayButton>
            <TrayButton $w={32} aria-label="Language">ENG</TrayButton>
            <Clock>
              2:10 PM
              <br />
              5/14/2022
            </Clock>
          </Tray>
        </Taskbar>
      </Screen>
    </>
  );
}
